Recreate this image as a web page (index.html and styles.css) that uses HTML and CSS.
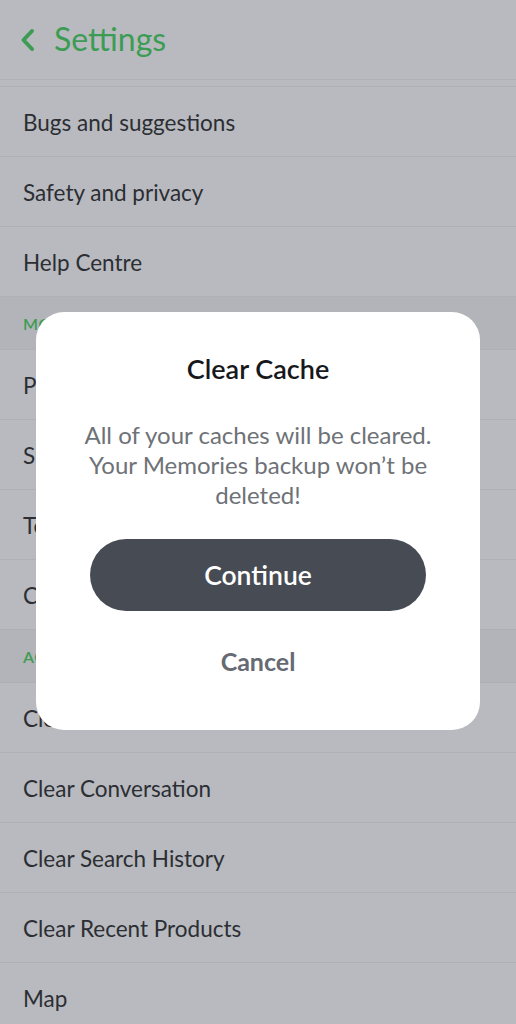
FILE: index.html
```html
<!DOCTYPE html>
<html lang="en">
<head>
    <meta charset="UTF-8">
    <meta name="viewport" content="width=device-width, initial-scale=1.0">
    <title>Settings</title>
    <link rel="stylesheet" href="styles.css">
</head>
<body>
    <div class="screen">
        <header class="top-bar">
            <svg class="back" width="17" height="24" viewBox="0 0 17 24">
                <path d="M13 3 L4.5 12 L13 21" fill="none" stroke="#3d9c54" stroke-width="4" stroke-linecap="round" stroke-linejoin="round"/>
            </svg>
            <span class="title">Settings</span>
        </header>
        <div class="gap"></div>

        <ul class="list">
            <li class="row">Bugs and suggestions</li>
            <li class="row">Safety and privacy</li>
            <li class="row">Help Centre</li>
            <li class="section">MORE INFORMATION</li>
            <li class="row">Privacy Policy</li>
            <li class="row">Support</li>
            <li class="row">Terms of Service</li>
            <li class="row">Copyright</li>
            <li class="section">ACCOUNT ACTIONS</li>
            <li class="row">Clear Cache</li>
            <li class="row">Clear Conversation</li>
            <li class="row">Clear Search History</li>
            <li class="row">Clear Recent Products</li>
            <li class="row">Map</li>
        </ul>

        <!-- Clear cache dialog -->
        <div class="dialog">
            <h2>Clear Cache</h2>
            <p>All of your caches will be cleared.<br>Your Memories backup won’t be deleted!</p>
            <button class="continue">Continue</button>
            <button class="cancel">Cancel</button>
        </div>
    </div>
</body>
</html>
```

FILE: styles.css
```css
body {
    margin: 0;
    font-family: Lato, "Noto Sans", sans-serif;
    background-color: #b8babf;
}
.screen {
    position: relative;
    width: 516px;
    height: 1024px;
    overflow: hidden;
    background-color: #b8babf;
}
.top-bar {
    height: 80px;
    display: flex;
    align-items: center;
    padding-left: 19px;
    box-sizing: border-box;
    border-bottom: 1px solid #aeb0b5;
}
.back {
    margin-right: 18px;
}
.title {
    color: #3d9c54;
    font-size: 32px;
    margin-top: -2px;
}
.gap {
    height: 6px;
    border-bottom: 1px solid #aeb0b5;
}
.list {
    list-style: none;
    margin: 0;
    padding: 0;
}
.row {
    height: 70px;
    display: flex;
    align-items: center;
    padding-left: 23px;
    padding-top: 2px;
    font-size: 22.5px;
    color: #2c2e33;
    border-bottom: 1px solid #aeb0b5;
    box-sizing: border-box;
}
.section {
    height: 53px;
    display: flex;
    align-items: center;
    padding-left: 23px;
    font-size: 16px;
    font-weight: 600;
    letter-spacing: 0.5px;
    color: #3d9c54;
    background-color: #b2b4b9;
    border-bottom: 1px solid #aeb0b5;
    box-sizing: border-box;
}
.dialog {
    position: absolute;
    left: 36px;
    top: 312px;
    width: 444px;
    height: 418px;
    box-sizing: border-box;
    background: white;
    border-radius: 28px;
    display: flex;
    flex-direction: column;
    align-items: center;
    padding-top: 40px;
}
.dialog h2 {
    margin: 0;
    font-size: 27px;
    font-weight: 600;
    color: #16181b;
    line-height: 34px;
}
.dialog p {
    margin: 34px 0 0;
    width: 380px;
    text-align: center;
    font-size: 24px;
    line-height: 30px;
    color: #6e7277;
}
.continue {
    margin-top: 29px;
    width: 336px;
    height: 72px;
    padding: 0;
    border: none;
    border-radius: 36px;
    background-color: #474c54;
    color: white;
    font-family: inherit;
    font-size: 26.5px;
    font-weight: 600;
}
.cancel {
    margin-top: 35px;
    padding: 0;
    line-height: 30px;
    border: none;
    background: none;
    font-family: inherit;
    font-size: 25px;
    font-weight: 700;
    color: #666a72;
}
```
